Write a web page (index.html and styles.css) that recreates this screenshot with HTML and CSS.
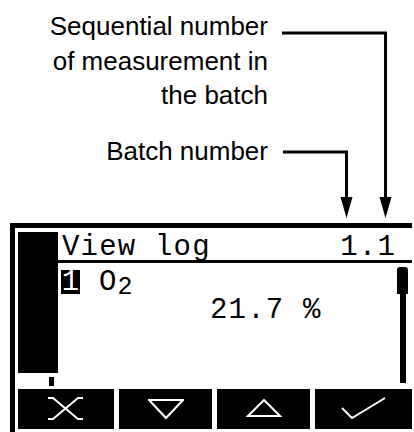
FILE: index.html
```html
<!DOCTYPE html>
<html lang="en">
<head>
  <meta charset="UTF-8" />
  <meta name="viewport" content="width=device-width, initial-scale=1.0"/>
  <title>View log display</title>
  <link rel="stylesheet" href="styles.css">
</head>
<body>
  <div class="notes">
    <p class="note">Sequential number<br>of measurement in<br>the batch</p>
    <p class="note batch">Batch number</p>

    <svg class="leaders" width="414" height="223" viewBox="0 0 414 223">
      <polyline points="282,33 385.5,33 385.5,200" />
      <polygon points="379.5,197 391.5,197 385.5,218" />
      <polyline points="283,152 346.5,152 346.5,200" />
      <polygon points="340.5,197 352.5,197 346.5,218" />
    </svg>
  </div>

  <div class="screen">
    <div class="upper">
      <div class="side">
        <div class="side-bar"></div>
        <div class="side-mark"></div>
      </div>

      <div class="main">
        <div class="title">
          <span>View log</span>
          <span>1.1</span>
        </div>

        <div class="content">
          <div class="lines">
            <div class="row-gas">
              <span class="index">1</span>
              <span class="gas">O<span class="sub">2</span></span>
            </div>
            <div class="row-value">21.7 %</div>
          </div>

          <div class="scroll">
            <div class="scroll-thumb"></div>
            <div class="scroll-track"></div>
          </div>
        </div>
      </div>
    </div>

    <div class="keys">
      <div class="key">
        <svg width="36" height="24" viewBox="0 0 36 24">
          <polyline points="0,1 5,1 30,22 35,22" />
          <polyline points="0,22 5,22 30,1 35,1" />
        </svg>
      </div>
      <div class="key">
        <svg width="36" height="22" viewBox="0 0 36 22">
          <polygon points="1,2 35,2 18,20" />
        </svg>
      </div>
      <div class="key">
        <svg width="36" height="20" viewBox="0 0 36 20">
          <polygon points="18,1 34,17 2,17" />
        </svg>
      </div>
      <div class="key">
        <svg width="46" height="24" viewBox="0 0 46 24">
          <polyline points="1,11 11,21 44,1" />
        </svg>
      </div>
    </div>
  </div>
</body>
</html>
```

FILE: styles.css
```css
body {
  margin: 0;
  width: 414px;
  height: 432px;
  overflow: hidden;
  background: white;
  color: #000;
}

.notes {
  position: relative;
  height: 223px;
  padding-right: 146px;
  box-sizing: border-box;
  font-family: 'Liberation Sans', Arial, sans-serif;
  font-size: 26px;
  line-height: 34.5px;
  text-align: right;
}

.note {
  margin: 0;
  padding-top: 9px;
}

.note.batch {
  padding-top: 21px;
}

.leaders {
  position: absolute;
  top: 0;
  left: 0;
}

.leaders polyline {
  fill: none;
  stroke: #000;
  stroke-width: 3;
}

.leaders polygon {
  fill: #000;
}

/* LCD panel */
.screen {
  width: 402px;
  height: 209px;
  margin-left: 10px;
  border-top: 5px solid #000;
  border-left: 5px solid #000;
  box-sizing: border-box;
  font-family: 'Liberation Mono', 'DejaVu Sans Mono', monospace;
  font-size: 29px;
  letter-spacing: 1.2px;
}

.upper {
  display: flex;
  height: 161px;
}

.side {
  width: 43px;
  padding: 4px 0 0 3px;
  box-sizing: border-box;
}

.side-bar {
  width: 40px;
  height: 141px;
  background: #000;
}

.side-mark {
  width: 5px;
  height: 9px;
  margin: 4px 0 0 31px;
  background: #000;
}

.main {
  width: 354px;
}

.title {
  display: flex;
  justify-content: space-between;
  height: 35px;
  padding: 4px 16px 0 4px;
  box-sizing: border-box;
  line-height: 31px;
  border-bottom: 3px solid #000;
}

.content {
  display: flex;
  justify-content: space-between;
  height: 123px;
}

.lines {
  padding: 7px 0 0 3px;
}

.row-gas {
  display: flex;
  align-items: flex-end;
  height: 24px;
}

.index {
  width: 19px;
  height: 24px;
  background: #000;
  color: white;
  line-height: 26px;
  text-align: center;
  letter-spacing: 0;
}

.gas {
  margin-left: 19px;
  line-height: 20px;
}

.sub {
  font-size: 25px;
  position: relative;
  top: 4px;
}

.row-value {
  margin-top: 4px;
  padding-left: 149px;
  line-height: 26px;
}

.scroll {
  display: flex;
  flex-direction: column;
  align-items: center;
  width: 11px;
  height: 116px;
  margin: 4px 4px 0 0;
}

.scroll-thumb {
  width: 11px;
  height: 27px;
  border-radius: 3px 3px 0 0;
  background: #000;
}

.scroll-track {
  flex: 1;
  width: 6px;
  background: #000;
}

/* soft keys */
.keys {
  display: grid;
  grid-template-columns: 96px 93px 93px 97px;
  gap: 5px;
  height: 40px;
  margin-left: 3px;
}

.key {
  display: flex;
  align-items: center;
  justify-content: center;
  background: #000;
}

.key svg {
  fill: none;
  stroke: white;
  stroke-width: 2;
}
```
